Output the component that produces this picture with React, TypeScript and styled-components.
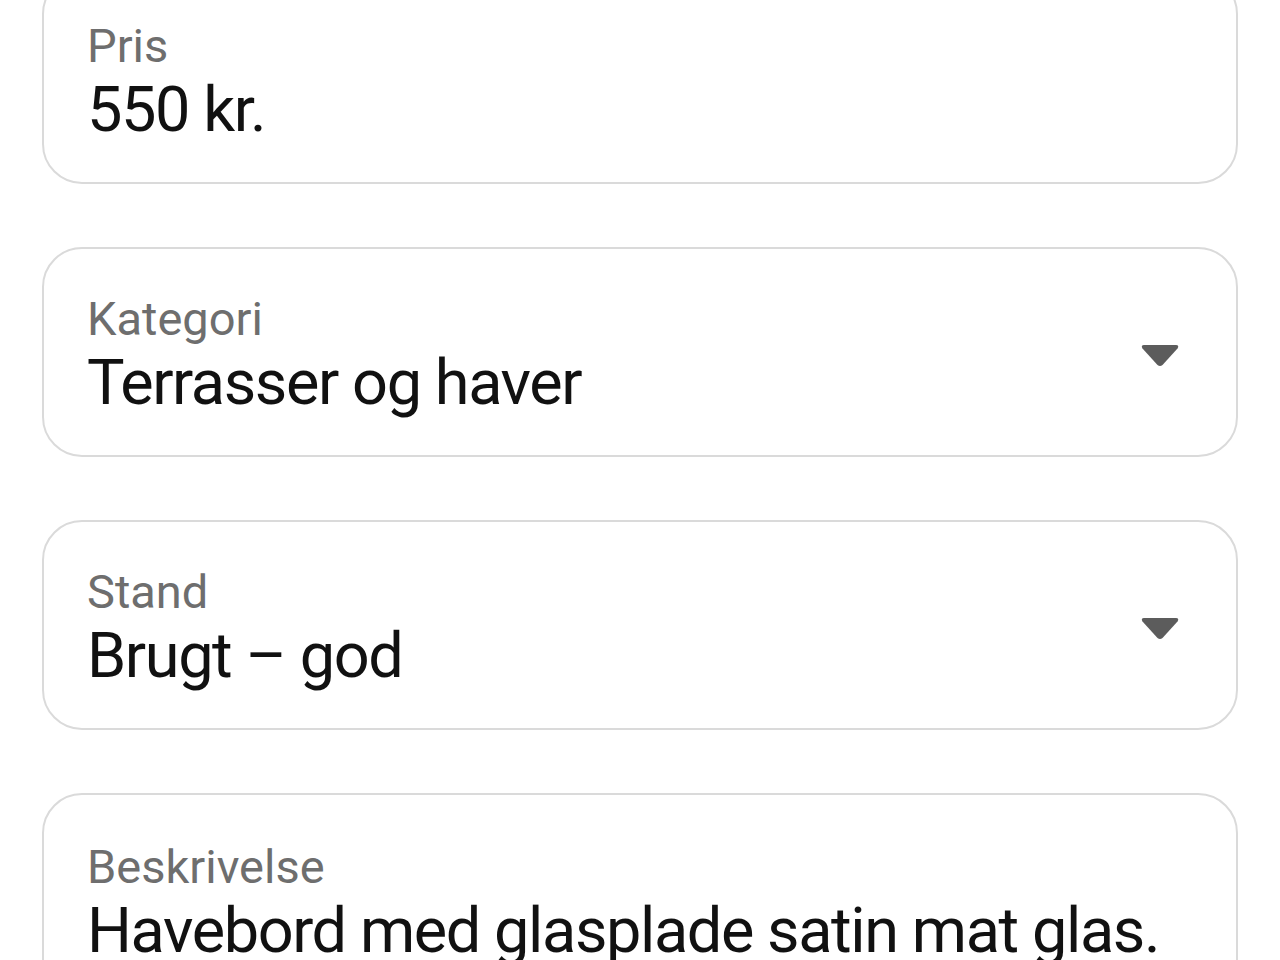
import styled, { createGlobalStyle } from "styled-components";

const GlobalStyle = createGlobalStyle`
  html, body {
    margin: 0;
    padding: 0;
    background: #ffffff;
  }
  body {
    font-family: Roboto, "Noto Sans", "Liberation Sans", sans-serif;
    overflow: hidden;
  }
`;

const Page = styled.div`
  width: 1280px;
  height: 960px;
  overflow: hidden;
  background: #ffffff;
`;

const Form = styled.div`
  display: flex;
  flex-direction: column;
  gap: 63px;
  margin-top: -26px;
  padding: 0 42px;
`;

const Field = styled.div<{ $tall?: boolean }>`
  box-sizing: border-box;
  display: flex;
  align-items: center;
  height: ${({ $tall }) => ($tall ? "420px" : "210px")};
  padding: 7px 56px 0 43px;
  border: 2px solid #dadada;
  border-radius: 40px;
  background: #ffffff;
  ${({ $tall }) => $tall && "align-items: flex-start; padding-top: 44px;"}
`;

const Content = styled.div`
  flex: 1;
  min-width: 0;
  display: flex;
  flex-direction: column;
`;

const Label = styled.span`
  font-size: 47px;
  color: #6e6e6e;
  line-height: 1.18;
`;

const Value = styled.span`
  font-size: 63px;
  letter-spacing: -1.4px;
  color: #111111;
  line-height: 1.18;
  white-space: nowrap;
`;

const Arrow = styled.svg`
  width: 40px;
  height: 26px;
  flex: none;
  margin-bottom: 2px;
`;

const DropArrow = () => (
  <Arrow viewBox="0 0 40 26">
    <path
      d="M4 3 H36 Q39.5 3 37.5 6.5 L22.5 23 Q20 25 17.5 23 L2.5 6.5 Q0.5 3 4 3 Z"
      fill="#5c5c5c"
    />
  </Arrow>
);

const App = () => {
  return (
    <Page>
      <GlobalStyle />
      <Form>
        <Field>
          <Content>
            <Label>Pris</Label>
            <Value>550 kr.</Value>
          </Content>
        </Field>
        <Field>
          <Content>
            <Label>Kategori</Label>
            <Value>Terrasser og haver</Value>
          </Content>
          <DropArrow />
        </Field>
        <Field>
          <Content>
            <Label>Stand</Label>
            <Value>Brugt – god</Value>
          </Content>
          <DropArrow />
        </Field>
        <Field $tall>
          <Content>
            <Label>Beskrivelse</Label>
            <Value>Havebord med glasplade satin mat glas.</Value>
          </Content>
        </Field>
      </Form>
    </Page>
  );
};

export default App;
